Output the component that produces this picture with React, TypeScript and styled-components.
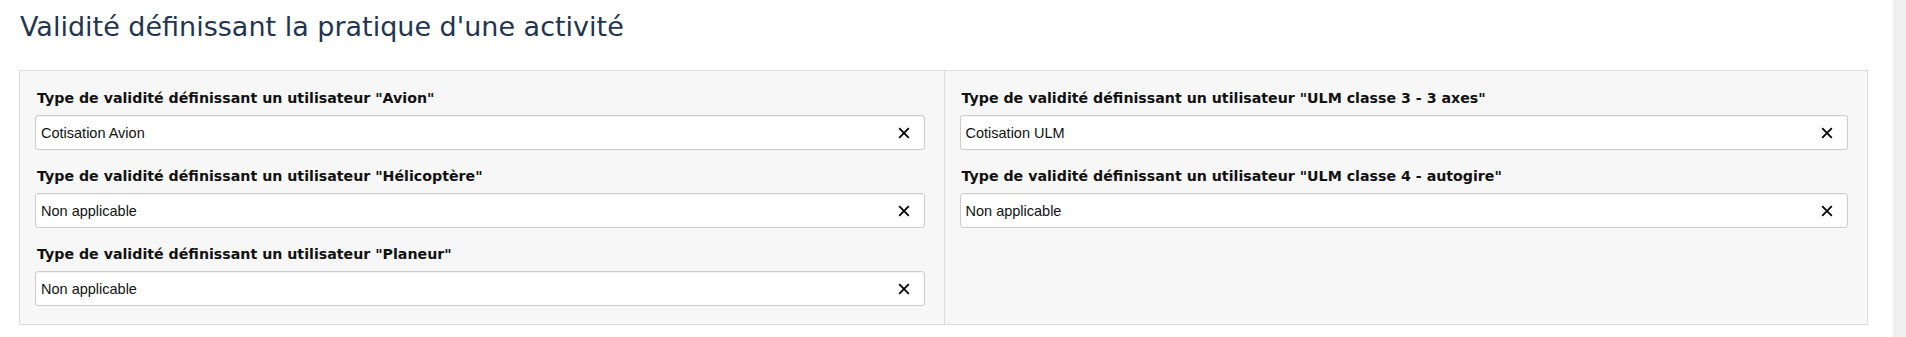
import React from 'react';
import styled, {createGlobalStyle} from "styled-components";

type FieldType = {
    label: string
    value: string
}

const leftFields: FieldType[] = [
    {label: 'Type de validité définissant un utilisateur "Avion"', value: 'Cotisation Avion'},
    {label: 'Type de validité définissant un utilisateur "Hélicoptère"', value: 'Non applicable'},
    {label: 'Type de validité définissant un utilisateur "Planeur"', value: 'Non applicable'},
]

const rightFields: FieldType[] = [
    {label: 'Type de validité définissant un utilisateur "ULM classe 3 - 3 axes"', value: 'Cotisation ULM'},
    {label: 'Type de validité définissant un utilisateur "ULM classe 4 - autogire"', value: 'Non applicable'},
]

const ClearIcon = () => (
    <svg width="12" height="12" viewBox="0 0 12 12">
        <path d="M1.2 1.2 L10.8 10.8 M10.8 1.2 L1.2 10.8" stroke="#000" strokeWidth="1.8" fill="none"/>
    </svg>
)

const Field = (props: FieldType) => {
    return (
        <FieldBlock>
            <Label>{props.label}</Label>
            <Select>
                <Value>{props.value}</Value>
                <Clear><ClearIcon/></Clear>
            </Select>
        </FieldBlock>
    )
}

export default function App() {
    return (
        <>
            <GlobalStyle/>
            <Page>
                <Main>
                    <Title>Validité définissant la pratique d'une activité</Title>
                    <Panel>
                        <Column>
                            {leftFields.map(f => <Field key={f.label} label={f.label} value={f.value}/>)}
                        </Column>
                        <Column divided>
                            {rightFields.map(f => <Field key={f.label} label={f.label} value={f.value}/>)}
                        </Column>
                    </Panel>
                </Main>
                <Scrollbar/>
            </Page>
        </>
    );
}

const GlobalStyle = createGlobalStyle`
  html, body {
    margin: 0;
    padding: 0;
    background: #fff;
  }
`

const Page = styled.div`
  display: flex;
  width: 1906px;
  height: 337px;
  overflow: hidden;
`

const Main = styled.div`
  flex: 1;
  padding: 0 25px 0 19px;
`

const Scrollbar = styled.div`
  width: 13px;
  background: #f0f0f0;
`

const Title = styled.h1`
  margin: 11px 0 27px 1px;
  font-family: "DejaVu Sans", Verdana, sans-serif;
  font-weight: normal;
  font-size: 27px;
  line-height: 32px;
  color: #1f3552;
`

const Panel = styled.div`
  display: grid;
  grid-template-columns: 1fr 1fr;
  background: #f7f7f7;
  border: 1px solid #dddddd;
`

const Column = styled.div<{ divided?: boolean }>`
  display: flex;
  flex-direction: column;
  gap: 18px;
  padding: 19px 19px 18px 15px;
  border-left: ${props => props.divided ? '1px solid #dddddd' : 'none'};
`

const FieldBlock = styled.div`
  display: flex;
  flex-direction: column;
`

const Label = styled.label`
  font-family: "DejaVu Sans", Verdana, sans-serif;
  font-weight: bold;
  font-size: 14.2px;
  line-height: 17px;
  color: #111;
  margin-bottom: 8px;
  padding-left: 2px;
`

const Select = styled.div`
  display: flex;
  align-items: center;
  height: 35px;
  box-sizing: border-box;
  background: #fff;
  border: 1px solid #cccccc;
  border-radius: 3px;
  box-shadow: inset 0 1px 1px rgba(0, 0, 0, 0.05);
  padding: 0 14px 0 5px;
`

const Value = styled.span`
  flex: 1;
  font-family: "Liberation Sans", Arial, sans-serif;
  font-size: 14.5px;
  color: #111;
`

const Clear = styled.span`
  display: flex;
  align-items: center;
`
